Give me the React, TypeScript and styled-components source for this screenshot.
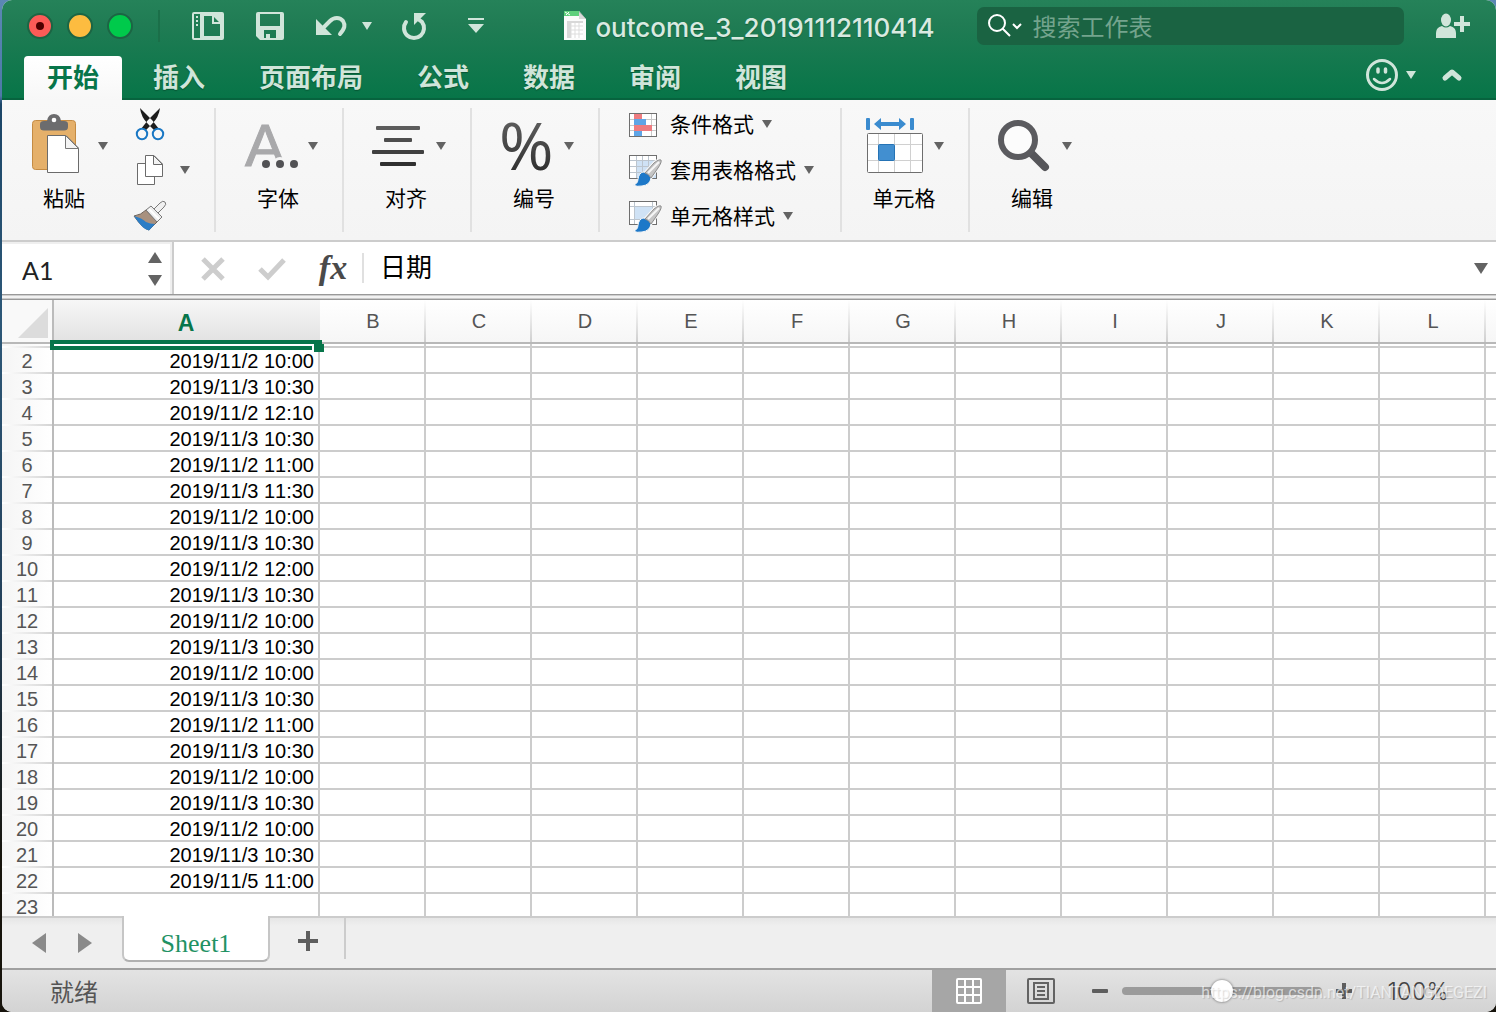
import React from "react";
import styled, { createGlobalStyle, css } from "styled-components";

const uiFont = `"Noto Sans CJK SC", "Liberation Sans", sans-serif`;
const latinFont = `Inter, "Noto Sans CJK SC", sans-serif`;
const cellFont = `"Liberation Sans", "Noto Sans CJK SC", sans-serif`;

const pale = "#d0e5da";
const excelGreen = "#07754a";
const gridLine = "#cccccc";

const GlobalStyle = createGlobalStyle`
  *, *::before, *::after { box-sizing: border-box; }
  body {
    margin: 0;
    background: linear-gradient(#5b87b4 0, #4d79a8 96px, #1c4668 104px, #2d5878 320px, #23405a 60%, #17140c 85%, #17140c);
    font-family: ${uiFont};
  }
  button, input {
    font: inherit;
    color: inherit;
    border: 0;
    padding: 0;
    margin: 0;
    background: none;
    outline: none;
  }
  svg { display: block; overflow: visible; flex: none; }
`;

const Window = styled.div`
  height: 100vh;
  margin-left: 2px;
  display: flex;
  flex-direction: column;
  overflow: hidden;
  position: relative;
  border-radius: 10px;
  background: #fff;
`;

/* ---------- title bar ---------- */

const Header = styled.header`
  flex: none;
  color: ${pale};
  background: linear-gradient(transparent 98px, #07633e 98px),
    linear-gradient(#258259, #207c54 25px, #077548 98px);
`;

const TitleBar = styled.div`
  height: 52px;
  display: grid;
  grid-template-columns: minmax(max-content, 1fr) auto minmax(0, 1fr);
  align-items: center;
`;

const QuickTools = styled.div`
  display: flex;
  align-items: center;
  padding-left: 25px;
`;

const Lights = styled.div`
  display: flex;
  gap: 14px;
  padding-right: 25px;
  margin-right: 32px;
  height: 32px;
  align-items: center;
  border-right: 2px solid #1b6f49;
`;

const Light = styled.button<{ $color: string }>`
  width: 26px;
  height: 26px;
  display: grid;
  place-items: center;
  border: 2px solid #1c6544;
  border-radius: 50%;
  background: ${(p) => p.$color};

  &:first-child::after {
    content: "";
    width: 8px;
    height: 8px;
    border-radius: 50%;
    background: #4d0000;
  }
`;

const IconButton = styled.button<{ $gap?: number }>`
  display: flex;
  align-items: center;
  flex: none;
  margin-right: ${(p) => p.$gap ?? 0}px;
`;

const DocumentTitle = styled.h1`
  margin: 0;
  display: flex;
  align-items: center;
  gap: 8px;
  font: 500 26px/36px ${latinFont};
  color: #d9eae1;
  text-shadow: 0 1px 1px rgba(0, 50, 25, 0.4);

  span { padding-top: 4px; }
`;

const TitleRight = styled.div`
  display: flex;
  align-items: center;
  gap: 32px;
  padding: 0 26px 0 42px;
`;

const SearchBox = styled.label`
  flex: 1;
  min-width: 0;
  height: 38px;
  padding: 0 11px;
  display: flex;
  align-items: center;
  gap: 10px;
  border-radius: 7px;
  background: #1a6342;

  input {
    flex: 1;
    min-width: 0;
    font-size: 24px;
    line-height: 36px;
    color: #fff;
  }
  input::placeholder { color: #74a48d; opacity: 1; }
`;

const TabBar = styled.nav`
  display: flex;
  align-items: center;
  height: 48px;
  padding: 4px 34px 0 22px;
`;

const Tab = styled.button<{ $active?: boolean }>`
  height: 44px;
  padding: 0 27px 4px;
  font-size: 26px;
  font-weight: 700;
  line-height: 38px;
  text-shadow: 0 1px 1px rgba(0, 50, 25, 0.5);
  ${(p) =>
    p.$active &&
    css`
      padding: 0 23px 4px;
      margin-right: 4px;
      border-radius: 4px 4px 0 0;
      color: ${excelGreen};
      background: linear-gradient(#fff, #f7f7f7);
      text-shadow: none;
    `}
`;

const TabActions = styled.div`
  display: flex;
  align-items: center;
  margin-left: auto;
  padding-bottom: 6px;
`;

/* ---------- ribbon ---------- */

const Ribbon = styled.section`
  flex: none;
  display: flex;
  padding: 8px 0;
  border-bottom: 2px solid ${gridLine};
  background: linear-gradient(#f8f8f8, #f4f4f4);
  color: #000;
`;

const Group = styled.div`
  display: flex;
  height: 124px;

  & + & { border-left: 2px solid #e1e1e1; }
`;

const BigButton = styled.button<{ $inset?: number }>`
  width: 126px;
  padding: 8px 2px 13px 0;
  display: flex;
  flex-direction: column;
  gap: 7px;
  font-size: 21px;
  line-height: 28px;
  text-align: center;

  > span:first-child {
    display: flex;
    align-items: center;
    gap: 4px;
    padding-left: ${(p) => p.$inset ?? 28}px;
  }
  > span:last-child { align-self: stretch; }
`;

const SmallButtons = styled.div<{ $list?: boolean }>`
  display: flex;
  flex-direction: column;
  align-items: flex-start;
  gap: 14px;
  padding: ${(p) => (p.$list ? "0 26px 0 28px" : "0 24px 0 6px")};
`;

const SmallButton = styled.button<{ $gap?: number }>`
  height: 32px;
  display: flex;
  align-items: center;
  gap: ${(p) => p.$gap ?? 8}px;
  font-size: 21px;
  line-height: 30px;

  span { padding-bottom: 2px; }
`;

/* ---------- formula bar ---------- */

const FormulaBar = styled.section`
  flex: none;
  height: 52px;
  display: flex;
  align-items: center;
  background: #fff;
`;

const NameBox = styled.div`
  width: 172px;
  height: 52px;
  padding: 2px 10px 0 20px;
  display: flex;
  align-items: center;
  border-right: 2px solid ${gridLine};
  box-shadow: inset -2px 2px #efefef;

  input {
    flex: 1;
    min-width: 0;
    padding-top: 2px;
    font: 25px/44px Lato, sans-serif;
    color: #222;
  }
`;

const Stepper = styled.div`
  display: flex;
  flex-direction: column;
  gap: 12px;
`;

const FormulaTools = styled.div`
  display: flex;
  align-items: center;
  padding-left: 27px;
  height: 30px;
  border-right: 2px solid #e0e0e0;
`;

const FxButton = styled.button`
  width: 30px;
  margin-right: 14px;
  font: italic 700 34px/30px "Liberation Serif", serif;
  color: #4a4a4a;
`;

const FormulaInput = styled.input`
  && {
    flex: 1;
    min-width: 0;
    padding: 0 0 4px 16px;
    font-size: 26px;
    line-height: 40px;
    color: #000;
  }
`;

const Divider = styled.div`
  flex: none;
  height: 6px;
  background: linear-gradient(#999 1px, #cfcfcf 1px 2px, #f2f2f2 2px 4px, #cacaca 4px 5px, #999 5px);
`;

/* ---------- grid ---------- */

const Sheet = styled.main`
  flex: 1;
  min-height: 0;
  overflow: hidden;
  position: relative;
  background: #fff;
`;

const Grid = styled.table`
  width: 100%;
  table-layout: fixed;
  border-collapse: separate;
  border-spacing: 0;
  font: 20px/22px ${cellFont};
  font-kerning: none;
`;

const Col = styled.col<{ $width?: number }>`
  width: ${(p) => (p.$width ? `${p.$width}px` : "auto")};
`;

const ColumnHead = styled.th<{ $selected?: boolean }>`
  height: 44px;
  padding: 0;
  border-bottom: 2px solid #b8b8b8;
  font-weight: 400;
  color: #555;
  background: linear-gradient(#fff, #cfcfcf) right / 2px 100% no-repeat, linear-gradient(#fff, #f6f6f6);

  &:last-child { background: linear-gradient(#fff, #f6f6f6); }
  ${(p) =>
    p.$selected &&
    css`
      padding: 3px 2px 0 0;
      font-size: 23px;
      font-weight: 700;
      color: ${excelGreen};
      background: linear-gradient(#f7f7f7, #e2e2e2);
    `}
`;

const Corner = styled.th`
  padding: 0 4px 4px 0;
  vertical-align: bottom;
  border-bottom: 2px solid #b8b8b8;
  border-right: 2px solid #bbb;
  background: #f9f9f9;

  button { display: block; margin-left: auto; }
`;

const RowHead = styled.th`
  padding: 2px 0;
  border-right: 2px solid #bbb;
  font-weight: 400;
  color: #555;
  background: linear-gradient(90deg, #fff, #d4d4d4) bottom / 100% 2px no-repeat,
    linear-gradient(90deg, #f5f5f5, #fff);
`;

const Row = styled.tr<{ $height: number }>`
  height: ${(p) => p.$height}px;
`;

const Cell = styled.td`
  padding: 2px 4px 0 0;
  text-align: right;
  white-space: nowrap;
  color: #000;
  border-right: 2px solid ${gridLine};
  border-bottom: 2px solid ${gridLine};

  &:last-child { border-right: 0; }
`;

const Selection = styled.div`
  position: absolute;
  left: 48px;
  top: 40px;
  width: 272px;
  height: 10px;
  border: 4px solid ${excelGreen};

  &::after {
    content: "";
    position: absolute;
    right: -6px;
    bottom: -6px;
    width: 10px;
    height: 8px;
    background: ${excelGreen};
    box-shadow: -2px 0 #fff;
  }
`;

/* ---------- sheet tabs ---------- */

const SheetBar = styled.nav`
  flex: none;
  height: 52px;
  display: flex;
  align-items: flex-start;
  padding-left: 30px;
  color: #8a8a8a;
  background: linear-gradient(${gridLine} 2px, #e6e6e6 2px, #efefef 10px);
`;

const SheetNav = styled.div`
  display: flex;
  gap: 32px;
  padding-top: 17px;
  width: 90px;
`;

const SheetTab = styled.button`
  width: 148px;
  height: 46px;
  padding-top: 12px;
  border: 2px solid #c6c6c6;
  border-top: 0;
  border-bottom-color: #b0b0b0;
  border-radius: 0 0 7px 7px;
  background: #fff;
  color: #1f9264;
  font: 26px/32px "Liberation Serif", serif;
`;

const AddSheet = styled.button`
  width: 76px;
  height: 41px;
  margin-top: 2px;
  padding: 13px 0 8px 28px;
  border-right: 2px solid ${gridLine};
`;

/* ---------- status bar ---------- */

const StatusBar = styled.footer`
  flex: none;
  height: 44px;
  display: flex;
  align-items: center;
  padding: 0 47px 0 48px;
  border-top: 2px solid #a0a0a0;
  background: linear-gradient(#e3e3e3, #d3d3d3);
  color: #555;
`;

const StatusText = styled.span`
  flex: 1;
  font-size: 24px;
  line-height: 40px;
`;

const ViewButton = styled.button<{ $active?: boolean }>`
  height: 42px;
  width: ${(p) => (p.$active ? 74 : 70)}px;
  display: grid;
  place-items: center;
  background: ${(p) => (p.$active ? "#a6a6a6" : "none")};
`;

const ZoomTools = styled.div`
  display: flex;
  align-items: center;
  gap: 14px;
  padding-left: 16px;
`;

const ZoomSlider = styled.input`
  appearance: none;
  width: 200px;
  height: 24px;

  &::-webkit-slider-runnable-track {
    height: 8px;
    border-radius: 4px;
    background: #9b9b9b;
  }
  &::-webkit-slider-thumb {
    appearance: none;
    width: 22px;
    height: 22px;
    margin-top: -7px;
    border-radius: 50%;
    background: #fff;
    box-shadow: 0 0 2px 1px rgba(0, 0, 0, 0.25);
  }
`;

const ZoomValue = styled.button`
  margin-left: 35px;
  padding-top: 2px;
  font: 300 24px/40px ${latinFont};
  color: #444;
`;

const Watermark = styled.span`
  position: absolute;
  right: 9px;
  bottom: 8px;
  font: 400 16px/22px Roboto, sans-serif;
  color: rgba(255, 255, 255, 0.65);
  text-shadow: 1px 1px 1px rgba(0, 0, 0, 0.15);
  pointer-events: none;
`;

/* ---------- icons ---------- */

function Arrow({ w = 10, h = 8, up = false, color = "#636363" }) {
  return (
    <svg width={w} height={h} fill={color}>
      <path d={up ? `M0 ${h}H${w}L${w / 2} 0Z` : `M0 0H${w}L${w / 2} ${h}Z`} />
    </svg>
  );
}

function SidebarIcon() {
  return (
    <svg width="32" height="28" fill={pale}>
      <path
        fillRule="evenodd"
        d="M2 0H30a2 2 0 0 1 2 2V26a2 2 0 0 1-2 2H2a2 2 0 0 1-2-2V2A2 2 0 0 1 2 0ZM2 2V26H8V2ZM12 4V24H28V12H20V4ZM22 5V10H27Z"
      />
      <path d="M4 4h2v2H4zM4 8h2v2H4zM4 12h2v2H4z" />
    </svg>
  );
}

function SaveIcon() {
  return (
    <svg width="28" height="28" fill={pale}>
      <path
        fillRule="evenodd"
        d="M2 0H26a2 2 0 0 1 2 2V26a2 2 0 0 1-2 2H4L0 24V2A2 2 0 0 1 2 0ZM4 2V14H24V2ZM8 18V26H10V22H14V26H20V18Z"
      />
    </svg>
  );
}

function UndoIcon() {
  return (
    <svg width="30" height="20">
      <path d="M0 3V19H16Z" fill={pale} />
      <path d="M8 11L14 5C18 1 24 1 27 5C29.500 9 29 12 24 18" fill="none" stroke={pale} strokeWidth="4" strokeLinecap="round" />
    </svg>
  );
}

function RedoIcon() {
  return (
    <svg width="25" height="27">
      <path d="M12 0H24L12 12Z" fill={pale} />
      <path d="M4 9A10 10 0 1 0 20 9L16 6" fill="none" stroke={pale} strokeWidth="4" strokeLinecap="round" />
    </svg>
  );
}

function CustomizeIcon() {
  return (
    <svg width="16" height="16" fill={pale}>
      <path d="M0 0H16V2H0ZM0 6H16L8 15Z" />
    </svg>
  );
}

function FileIcon() {
  return (
    <svg width="24" height="30">
      <path d="M1 0H16L23 8V29H1Z" fill="#fbfbfb" />
      <path d="M1 0H16V5H1Z" fill="#5fd07c" />
      <path d="M2 1L7 4M6 1L3 4" stroke="#fff" />
      <path d="M16 1V8H23Z" fill="#555" />
      <path d="M16 8V1L23 8Z" fill="#d9d9d9" />
      <path d="M4 10H20V27H4Z" fill="#d8d8d8" />
      <path d="M8 12H20V27H8Z" fill="#fff" />
      <path d="M8 15H20M8 19H20M8 23H20M12 12V27M16 12V27M8 12V27" stroke="#ddd" />
    </svg>
  );
}

function SearchIcon() {
  return (
    <svg width="35" height="26" fill="none" stroke="#fff" strokeWidth="2">
      <circle cx="9" cy="10" r="8" />
      <path d="M14.500 15.500L22 23M25 11L29 15L33 11" />
    </svg>
  );
}

function ShareIcon() {
  return (
    <svg width="34" height="26" fill={pale}>
      <ellipse cx="10" cy="7" rx="5" ry="6.500" />
      <path d="M0 25V21C0 16 2 14 6 13Q10 16 14 13C18 14 20 16 20 21V25ZM24 3H28V9H34V13H28V19H24V13H18V9H24Z" />
    </svg>
  );
}

function SmileIcon() {
  return (
    <svg width="32" height="32" fill="none" stroke={pale} strokeLinecap="round">
      <circle cx="16" cy="16" r="14.500" strokeWidth="3" />
      <path d="M12 10V13M19.500 10V13" strokeWidth="3.500" />
      <path d="M8 20Q16 28 24 20" strokeWidth="2.500" />
    </svg>
  );
}

function CollapseIcon() {
  return (
    <svg width="20" height="12" fill="none" stroke={pale} strokeWidth="5" strokeLinecap="round" strokeLinejoin="round">
      <path d="M3 9L10 3L17 9" />
    </svg>
  );
}

function PasteIcon() {
  return (
    <svg width="62" height="60">
      <rect x="0.500" y="4.500" width="43" height="49" rx="3" fill="#e5b06a" stroke="#c48b43" />
      <path d="M8 8Q8 5 12 5H15Q16 -2 22 -2Q28 -2 29 5H32Q36 5 36 8V11Q36 14.500 32 14.500H12Q8 14.500 8 11Z" fill="#6c6c6e" />
      <circle cx="22" cy="4" r="2.300" fill="#fff" />
      <path d="M15.500 19.500H34L46.500 32V56.500H15.500Z" fill="#fff" stroke="#6b6b6b" />
      <path d="M33.500 19.500V32.500H46.500Z" fill="#f4f4f4" stroke="#777" />
    </svg>
  );
}

function CutIcon() {
  return (
    <svg width="32" height="32">
      <path d="M6 0L18 12L25 21L21 23L14 16Q7 9 6 0ZM26 0L14 12L7 21L11 23L18 16Q25 9 26 0Z" fill="#1c1c1c" />
      <g fill="#f7f7f7" stroke="#1977c4" strokeWidth="2">
        <circle cx="8" cy="26" r="5.200" />
        <circle cx="24" cy="26" r="5.200" />
      </g>
    </svg>
  );
}

function CopyIcon() {
  return (
    <svg width="32" height="32" fill="#fff" stroke="#6b6b6b">
      <path d="M3.500 9.500H20.500V30.500H3.500Z" />
      <path d="M11.500 1.500H20L28.500 10V22.500H11.500Z" />
      <path d="M19.500 1.500V10.500H28.500Z" fill="#f3f3f3" />
    </svg>
  );
}

function FormatPainterIcon() {
  return (
    <svg width="32" height="32">
      <path d="M12 10L23 22L15 30Q9 29 0 16Q7 15 12 10Z" fill="#a8917f" stroke="#6d6259" />
      <path d="M0 16Q8 18 12 22Q16 24 21 24L15 30.500Q9 30 0 16Z" fill="#2b7dc6" />
      <path d="M19 10L26 3Q29 0 31 2Q33 4 30 7L23 14Z" fill="#f0f0f0" stroke="#7a7a7a" />
      <path d="M12 10L17 6L28 17L23 22Z" fill="#ededed" stroke="#7a7a7a" />
      <path d="M15 9L25 19" stroke="#fff" strokeWidth="2" />
    </svg>
  );
}

function FontIcon() {
  return (
    <svg width="60" height="60">
      <text x="1" y="50" fontFamily="Liberation Sans, sans-serif" fontSize="60" fill="#a9a9ab" stroke="#a9a9ab">
        A
      </text>
      <circle cx="36" cy="48" r="7" fill="#f6f6f6" />
      <g fill="#525255">
        <circle cx="22" cy="48" r="4" />
        <circle cx="36" cy="48" r="4" />
        <circle cx="50" cy="48" r="4" />
      </g>
    </svg>
  );
}

function AlignIcon() {
  return (
    <svg width="60" height="60">
      <rect x="4" y="10" width="44" height="4" rx="1" fill="#5c5c5c" />
      <rect x="12" y="22" width="28" height="4" rx="1" fill="#4d4d4d" />
      <rect x="0" y="34" width="52" height="4" rx="1" fill="#404040" />
      <rect x="8" y="46" width="36" height="4" rx="1" fill="#303030" />
    </svg>
  );
}

function PercentIcon() {
  return (
    <svg width="60" height="60">
      <defs>
        <linearGradient id="percent" x1="0" y1="0" x2="0" y2="1">
          <stop offset="0.2" stopColor="#606060" />
          <stop offset="0.8" stopColor="#303030" />
        </linearGradient>
      </defs>
      <text x="-1" y="54" fontFamily="Open Sans, sans-serif" fontSize="66" fill="url(#percent)">
        %
      </text>
    </svg>
  );
}

function ConditionalIcon() {
  return (
    <svg width="34" height="32">
      <rect x="1.500" y="5.500" width="27" height="23" fill="#fff" stroke="#6f6f6f" />
      <path d="M2 11.500H28M2 17.500H28M2 22.500H28M6.500 6V28M23.500 6V28" stroke="#c9c9c9" />
      <path d="M6 6H14V11H6ZM6 17H24V23H6Z" fill="#ee7c80" />
      <path d="M6 11H18V17H6ZM6 23H14V28H6Z" fill="#5fa5e6" />
    </svg>
  );
}

function Brush() {
  return (
    <g>
      <path d="M33 6Q34 8 30 14L22 25L16 20L26 9Q31 5 33 6Z" fill="#f7f7f7" stroke="#f7f7f7" strokeWidth="3" />
      <path d="M15 18Q21 18 23 24Q22 31 14 32Q9 33 5 31Q10 30 10 25Q11 19 15 18Z" fill="#1d78c8" stroke="#f7f7f7" />
      <path d="M33 6Q34 8 30 14L23 24Q21 20 17 19L26 9Q31 5 33 6Z" fill="#c5c5c5" stroke="#8d8d8d" />
      <path d="M20 19L31 8" stroke="#f6f6f6" strokeWidth="2" />
    </g>
  );
}

function TableFormatIcon() {
  return (
    <svg width="34" height="32">
      <rect x="1.500" y="1.500" width="27" height="23" fill="#fff" stroke="#6f6f6f" />
      <path d="M8 6H28V24H8Z" fill="#cfe2f5" />
      <path d="M2 6.500H28M2 12.500H28M2 18.500H28M8.500 2V24M14.500 2V24M20.500 2V24" stroke="#bcc5ce" />
      <Brush />
    </svg>
  );
}

function CellStyleIcon() {
  return (
    <svg width="34" height="32">
      <rect x="1.500" y="1.500" width="27" height="23" fill="#fff" stroke="#6f6f6f" />
      <path d="M6 6H24V20H6Z" fill="#cfe2f5" />
      <path d="M2 6.500H28M2 19.500H28M6.500 2V24M24.500 2V24" stroke="#bcc5ce" />
      <Brush />
    </svg>
  );
}

function CellsIcon() {
  return (
    <svg width="60" height="60">
      <g fill="#3a8bcf">
        <rect x="-4" y="2" width="4" height="12" rx="1" />
        <rect x="40" y="2" width="4" height="12" rx="1" />
        <path d="M4 8L11 2V6H29V2L36 8L29 14V10H11V14Z" />
      </g>
      <rect x="-2.500" y="17.500" width="55" height="39" rx="1" fill="#fff" stroke="#6e6e6e" />
      <path d="M-2 28.500H52M-2 44.500H52M8.500 18V56M24.500 18V56M40.500 18V56" stroke="#d0d0d0" />
      <rect x="8.500" y="28.500" width="16" height="16" rx="1" fill="#428fd0" stroke="#2573b5" />
    </svg>
  );
}

function EditIcon() {
  return (
    <svg width="60" height="60">
      <path d="M32 36L47 51" stroke="#56565a" strokeWidth="8" strokeLinecap="round" />
      <circle cx="20" cy="24" r="17" fill="#fcfcfc" stroke="#5b5b5f" strokeWidth="6" />
    </svg>
  );
}

function CancelIcon() {
  return (
    <svg width="24" height="24" stroke="#cdcdcd" strokeWidth="5" fill="none">
      <path d="M2 3L22 23M22 3L2 23" />
    </svg>
  );
}

function AcceptIcon() {
  return (
    <svg width="28" height="24" stroke="#cdcdcd" strokeWidth="5" fill="none">
      <path d="M2 13L10 21L26 4" />
    </svg>
  );
}

function GridViewIcon() {
  return (
    <svg width="26" height="26" fill="none" stroke="#fff" strokeWidth="2">
      <rect x="1" y="1" width="24" height="24" rx="1" />
      <path d="M1 9H25M1 17H25M9 1V25M17 1V25" />
    </svg>
  );
}

function PageViewIcon() {
  return (
    <svg width="28" height="26" fill="none" stroke="#636363" strokeWidth="2">
      <rect x="1" y="1" width="26" height="24" rx="1" />
      <rect x="7" y="5" width="14" height="16" />
      <path d="M10 9H18M10 13H18M10 17H18" />
    </svg>
  );
}

function PlusIcon({ size = 16 }) {
  const c = size / 2;
  return (
    <svg width={size} height={size} stroke="#5e5e5e" strokeWidth="4">
      <path d={`M0 ${c}H${size}M${c} 0V${size}`} />
    </svg>
  );
}

/* ---------- data ---------- */

const tabs = ["开始", "插入", "页面布局", "公式", "数据", "审阅", "视图"];
const columns = "ABCDEFGHIJKL".split("");
const dates = [
  "2019/11/2 10:00",
  "2019/11/3 10:30",
  "2019/11/2 12:10",
  "2019/11/3 10:30",
  "2019/11/2 11:00",
  "2019/11/3 11:30",
  "2019/11/2 10:00",
  "2019/11/3 10:30",
  "2019/11/2 12:00",
  "2019/11/3 10:30",
  "2019/11/2 10:00",
  "2019/11/3 10:30",
  "2019/11/2 10:00",
  "2019/11/3 10:30",
  "2019/11/2 11:00",
  "2019/11/3 10:30",
  "2019/11/2 10:00",
  "2019/11/3 10:30",
  "2019/11/2 10:00",
  "2019/11/3 10:30",
  "2019/11/5 11:00",
  "",
];

function RibbonButton({ icon, label, inset }: { icon: React.ReactNode; label: string; inset?: number }) {
  return (
    <BigButton $inset={inset}>
      <span>
        {icon}
        <Arrow />
      </span>
      <span>{label}</span>
    </BigButton>
  );
}

export default function App() {
  return (
    <>
      <GlobalStyle />
      <Window>
        <Header>
          <TitleBar>
            <QuickTools>
              <Lights>
                <Light $color="#fc5b57" aria-label="关闭" />
                <Light $color="#fdbc40" aria-label="最小化" />
                <Light $color="#00ca4b" aria-label="全屏" />
              </Lights>
              <IconButton $gap={32} aria-label="边栏"><SidebarIcon /></IconButton>
              <IconButton $gap={32} aria-label="保存"><SaveIcon /></IconButton>
              <IconButton $gap={16} aria-label="撤销"><UndoIcon /></IconButton>
              <IconButton $gap={30} aria-label="撤销列表"><Arrow color={pale} /></IconButton>
              <IconButton $gap={41} aria-label="重复"><RedoIcon /></IconButton>
              <IconButton aria-label="自定义工具栏"><CustomizeIcon /></IconButton>
            </QuickTools>
            <DocumentTitle>
              <FileIcon />
              <span>outcome_3_20191112110414</span>
            </DocumentTitle>
            <TitleRight>
              <SearchBox>
                <SearchIcon />
                <input type="text" placeholder="搜索工作表" aria-label="搜索工作表" />
              </SearchBox>
              <IconButton aria-label="共享"><ShareIcon /></IconButton>
            </TitleRight>
          </TitleBar>
          <TabBar>
            {tabs.map((name, i) => (
              <Tab key={name} $active={i === 0}>{name}</Tab>
            ))}
            <TabActions>
              <IconButton $gap={8} aria-label="反馈"><SmileIcon /></IconButton>
              <IconButton $gap={26} aria-label="反馈选项"><Arrow color={pale} /></IconButton>
              <IconButton aria-label="折叠功能区"><CollapseIcon /></IconButton>
            </TabActions>
          </TabBar>
        </Header>

        <Ribbon>
          <Group>
            <RibbonButton icon={<PasteIcon />} label="粘贴" inset={30} />
            <SmallButtons>
              <SmallButton aria-label="剪切"><CutIcon /></SmallButton>
              <SmallButton $gap={14} aria-label="复制"><CopyIcon /><Arrow /></SmallButton>
              <SmallButton aria-label="格式刷"><FormatPainterIcon /></SmallButton>
            </SmallButtons>
          </Group>
          <Group><RibbonButton icon={<FontIcon />} label="字体" /></Group>
          <Group><RibbonButton icon={<AlignIcon />} label="对齐" /></Group>
          <Group><RibbonButton icon={<PercentIcon />} label="编号" /></Group>
          <Group>
            <SmallButtons $list>
              <SmallButton><ConditionalIcon /><span>条件格式</span><Arrow /></SmallButton>
              <SmallButton><TableFormatIcon /><span>套用表格格式</span><Arrow /></SmallButton>
              <SmallButton><CellStyleIcon /><span>单元格样式</span><Arrow /></SmallButton>
            </SmallButtons>
          </Group>
          <Group><RibbonButton icon={<CellsIcon />} label="单元格" /></Group>
          <Group><RibbonButton icon={<EditIcon />} label="编辑" /></Group>
        </Ribbon>

        <FormulaBar>
          <NameBox>
            <input type="text" defaultValue="A1" aria-label="名称框" />
            <Stepper>
              <IconButton aria-label="上一个名称"><Arrow w={14} h={11} up /></IconButton>
              <IconButton aria-label="下一个名称"><Arrow w={14} h={11} /></IconButton>
            </Stepper>
          </NameBox>
          <FormulaTools>
            <IconButton $gap={33} aria-label="取消"><CancelIcon /></IconButton>
            <IconButton $gap={32} aria-label="输入"><AcceptIcon /></IconButton>
            <FxButton aria-label="插入函数">fx</FxButton>
          </FormulaTools>
          <FormulaInput type="text" defaultValue="日期" aria-label="编辑栏" />
          <IconButton $gap={8} aria-label="展开编辑栏"><Arrow w={14} h={11} /></IconButton>
        </FormulaBar>
        <Divider />

        <Sheet>
          <Grid>
            <colgroup>
              <Col $width={52} />
              {columns.map((c) => (
                <Col key={c} $width={c === "A" ? 266 : 106} />
              ))}
              <Col />
            </colgroup>
            <thead>
              <tr>
                <Corner>
                  <button aria-label="全选">
                    <svg width="30" height="30" fill="#dcdcdc"><path d="M0 30H30V0Z" /></svg>
                  </button>
                </Corner>
                {columns.map((c) => (
                  <ColumnHead key={c} scope="col" $selected={c === "A"}>{c}</ColumnHead>
                ))}
                <ColumnHead as="td" />
              </tr>
            </thead>
            <tbody>
              <Row $height={4}>
                <RowHead as="td" />
                {columns.map((c) => <Cell key={c} />)}
                <Cell />
              </Row>
              {dates.map((date, i) => (
                <Row key={i} $height={26}>
                  <RowHead scope="row">{i + 2}</RowHead>
                  {columns.map((c) => (
                    <Cell key={c}>{c === "A" ? date : null}</Cell>
                  ))}
                  <Cell />
                </Row>
              ))}
            </tbody>
          </Grid>
          <Selection />
        </Sheet>

        <SheetBar>
          <SheetNav>
            <IconButton aria-label="上一个工作表">
              <svg width="14" height="20" fill="#8a8a8a"><path d="M14 0V20L0 10Z" /></svg>
            </IconButton>
            <IconButton aria-label="下一个工作表">
              <svg width="14" height="20" fill="#8a8a8a"><path d="M0 0V20L14 10Z" /></svg>
            </IconButton>
          </SheetNav>
          <SheetTab>Sheet1</SheetTab>
          <AddSheet aria-label="新建工作表"><PlusIcon size={20} /></AddSheet>
        </SheetBar>

        <StatusBar>
          <StatusText>就绪</StatusText>
          <ViewButton $active aria-label="普通视图"><GridViewIcon /></ViewButton>
          <ViewButton aria-label="页面布局视图"><PageViewIcon /></ViewButton>
          <ZoomTools>
            <IconButton aria-label="缩小">
              <svg width="16" height="4" fill="#5e5e5e"><rect width="16" height="4" rx="1" /></svg>
            </IconButton>
            <ZoomSlider type="range" min="0" max="100" defaultValue="50" aria-label="缩放" />
            <IconButton aria-label="放大"><PlusIcon /></IconButton>
          </ZoomTools>
          <ZoomValue>100%</ZoomValue>
        </StatusBar>
        <Watermark>https://blog.csdn.net/TIANTANGDEGEZI</Watermark>
      </Window>
    </>
  );
}
